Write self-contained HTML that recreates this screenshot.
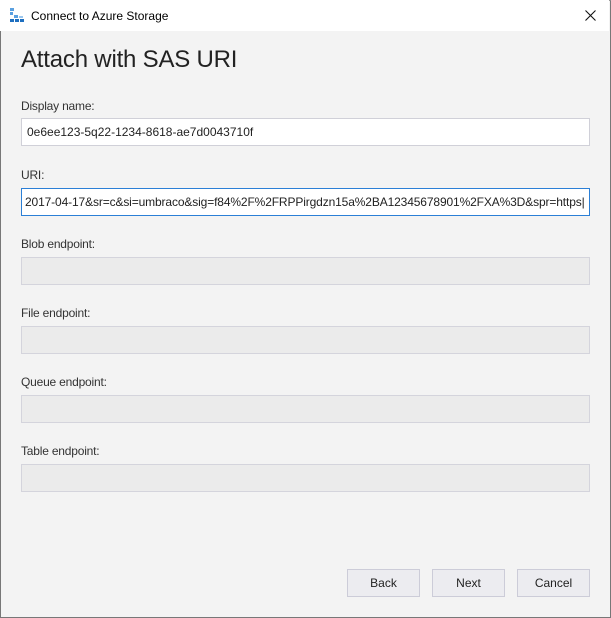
<!DOCTYPE html>
<html><head><meta charset="utf-8"><style>
*{margin:0;padding:0;box-sizing:border-box}
html,body{width:611px;height:618px;overflow:hidden}
body{font-family:"Segoe UI","Liberation Sans",sans-serif;background:#f3f3f3;position:relative;font-size:12px;color:#222}
.win{position:absolute;left:0;top:0;width:611px;height:618px;border:1px solid #777;border-top:1px solid #999}
.title{position:absolute;left:0;top:0;width:609px;height:31px;background:#fff}
.title span{position:absolute;left:31px;top:9px;font-size:12px;color:#000}
h1{position:absolute;left:21px;top:46px;font-size:24px;font-weight:normal;color:#222;letter-spacing:-0.2px}
.lbl{position:absolute;left:21px;font-size:12px;color:#333;letter-spacing:-0.2px}
.in{position:absolute;left:21px;width:569px;height:28px;border:1px solid #d0d0d8;background:#fff;padding:6px 0 0 5px;font-size:12px;white-space:nowrap;overflow:hidden;color:#222}
.dis{background:#ebebeb;border-color:#d4d4dc}
.btn{position:absolute;top:569px;width:73px;height:28px;border:1px solid #ccccd8;background:#ececf0;text-align:center;line-height:26px;font-size:12px;color:#222}
</style></head><body>
<div class="win"></div>
<div class="title">
<svg style="position:absolute;left:9px;top:7px" width="16" height="16" viewBox="0 0 16 16">
<rect x="1" y="1" width="4" height="3" fill="#5aa0e0"/><rect x="1" y="5" width="3" height="3" fill="#5aa0e0"/><rect x="5" y="8" width="4" height="3" fill="#5aa0e0"/>
<rect x="1" y="12" width="4" height="3" fill="#1e6fc0"/><rect x="6" y="12" width="4" height="3" fill="#1e6fc0"/><rect x="11" y="12" width="4" height="3" fill="#1e6fc0"/>
<rect x="10" y="9" width="4" height="2" fill="#9cc8ef"/>
</svg>
<span>Connect to Azure Storage</span>
<svg style="position:absolute;left:585px;top:10px" width="11" height="11" viewBox="0 0 11 11"><path d="M0.5 0.5L10.5 10.5M10.5 0.5L0.5 10.5" stroke="#111" stroke-width="1.1"/></svg>
</div>
<h1>Attach with SAS URI</h1>
<div class="lbl" style="top:99px">Display name:</div>
<div class="in" style="top:118px">0e6ee123-5q22-1234-8618-ae7d0043710f</div>
<div class="lbl" style="top:168px">URI:</div>
<div class="in" style="top:188px;border-color:#2b7fd6;padding-left:3px;letter-spacing:-0.13px">2017-04-17&amp;sr=c&amp;si=umbraco&amp;sig=f84%2F%2FRPPirgdzn15a%2BA12345678901%2FXA%3D&amp;spr=https|</div>
<div class="lbl" style="top:237px">Blob endpoint:</div>
<div class="in dis" style="top:257px"></div>
<div class="lbl" style="top:306px">File endpoint:</div>
<div class="in dis" style="top:326px"></div>
<div class="lbl" style="top:375px">Queue endpoint:</div>
<div class="in dis" style="top:395px"></div>
<div class="lbl" style="top:444px">Table endpoint:</div>
<div class="in dis" style="top:464px"></div>
<div class="btn" style="left:347px">Back</div>
<div class="btn" style="left:432px">Next</div>
<div class="btn" style="left:517px">Cancel</div>
</body></html>
